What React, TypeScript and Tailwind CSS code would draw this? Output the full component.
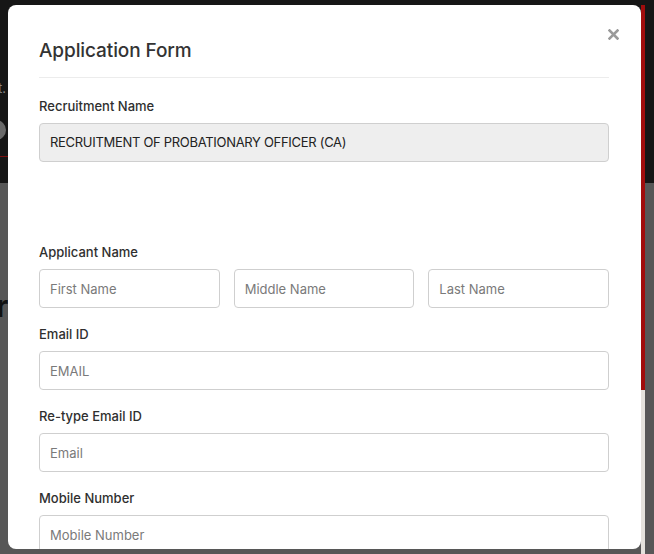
import React from 'react';

const inputCls =
  'block w-full h-[39px] px-[10px] text-[13px] border border-[#cfcfcf] rounded-[4px] bg-white placeholder:text-[#7a7a7a] outline-none';

const Label: React.FC<{ children: React.ReactNode }> = ({ children }) => (
  <label className="block text-[13px] leading-5 font-medium text-[#2f2f2f] mb-[7px]">{children}</label>
);

const Field: React.FC<{ label: string; placeholder: string }> = ({ label, placeholder }) => (
  <div>
    <Label>{label}</Label>
    <input placeholder={placeholder} className={inputCls} />
  </div>
);

export default function App() {
  return (
    <div className="relative w-[654px] h-[554px] overflow-hidden bg-[#575757]" style={{ fontFamily: 'Inter, "Noto Sans", sans-serif' }}>
      {/* page behind the overlay */}
      <div className="h-[183px] bg-[#161616] pt-[78px] flex flex-col items-start">
        <span className="ml-[-2px] text-[13px] leading-5 text-[#888]">t.</span>
        <div className="ml-[-14px] mt-[22px] w-[20px] h-[20px] rounded-full bg-[#6a6a6a]" />
        <div className="mt-[16px] w-[8px] h-[1px] bg-[#7a1010]" />
      </div>
      <div className="pt-[108px] pl-0">
        <span className="block ml-[-4px] text-[30px] font-bold leading-none text-[#111]">r</span>
      </div>

      {/* modal */}
      <div className="absolute left-[8px] top-[5px] w-[633px] h-[544px] bg-white rounded-[8px] overflow-hidden">
        <div className="pl-[31px] pr-[32px]">
          <div className="flex items-start justify-between pt-[32px] pb-[12px] border-b border-[#ececec]">
            <h2 className="text-[19px] leading-7 font-medium text-[#333] tracking-[-0.1px]">Application Form</h2>
            <button className="mt-[-8px] mr-[-10px] w-[11px] h-[11px] text-[#9a9a9a]">
              <svg viewBox="0 0 11 11" className="w-[11px] h-[11px]">
                <path d="M1.5 1.5 L9.5 9.5 M9.5 1.5 L1.5 9.5" stroke="currentColor" strokeWidth="2.6" strokeLinecap="square" />
              </svg>
            </button>
          </div>

          <div className="pt-[18px] flex flex-col">
            <div>
              <Label>Recruitment Name</Label>
              <div className="h-[39px] flex items-center px-[10px] text-[13px] text-[#222] bg-[#eeeeee] border border-[#cfcfcf] rounded-[4px] tracking-[-0.3px]">
                RECRUITMENT OF PROBATIONARY OFFICER (CA)
              </div>
            </div>

            <div className="mt-[80px] flex flex-col gap-4">
              <div>
                <Label>Applicant Name</Label>
                <div className="grid grid-cols-3 gap-[14px]">
                  {['First Name', 'Middle Name', 'Last Name'].map(p => (
                    <input key={p} placeholder={p} className={inputCls} />
                  ))}
                </div>
              </div>
              <Field label="Email ID" placeholder="EMAIL" />
              <Field label="Re-type Email ID" placeholder="Email" />
              <Field label="Mobile Number" placeholder="Mobile Number" />
            </div>
          </div>
        </div>
      </div>

      {/* modal scrollbar */}
      <div className="absolute left-[641px] top-[5px] w-[4px] h-[549px] bg-[#e4e2dc]">
        <div className="h-[385px] bg-[#a00d0d]" />
      </div>
    </div>
  );
}
